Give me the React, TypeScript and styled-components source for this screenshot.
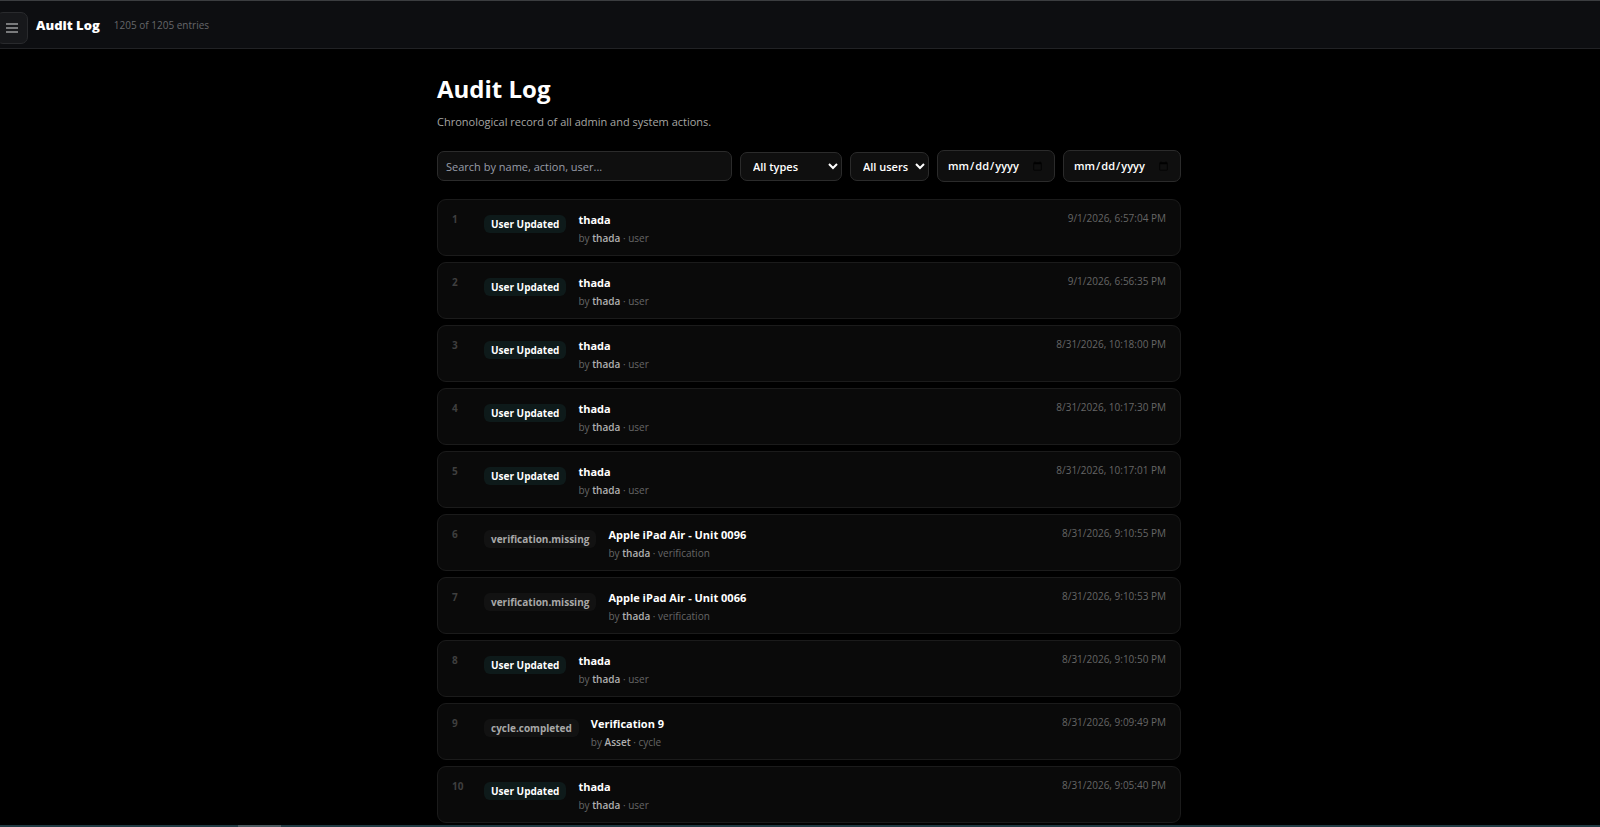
import React from "react";
import styled, { createGlobalStyle } from "styled-components";

const GlobalStyle = createGlobalStyle`
  *, *::before, *::after { box-sizing: border-box; }
  body {
    margin: 0;
    background: #000;
    color: #fff;
    font-family: "Open Sans", "Noto Sans", sans-serif;
    font-size: 11px;
    line-height: 18px;
  }
  button, input, select { font: inherit; color: inherit; }
`;

const Shell = styled.div`
  min-height: 100vh;
  padding-bottom: 4px;
`;

const TopBar = styled.header`
  display: flex;
  align-items: center;
  height: 49px;
  padding-left: 36px;
  gap: 14px;
  background: #0d0e11;
  border-top: 1px solid #3b3d40;
  border-bottom: 1px solid #212225;
`;

const MenuButton = styled.button`
  position: absolute;
  top: 12px;
  left: -4px;
  display: flex;
  align-items: center;
  justify-content: center;
  width: 32px;
  height: 32px;
  padding: 0;
  background: #17181b;
  border: 1px solid #292a2d;
  border-radius: 7px;
  color: #9a9b9d;
`;

const BarTitle = styled.span`
  font-size: 13px;
  font-weight: 800;
`;

const BarCount = styled.span`
  font-size: 10px;
  color: #66676a;
`;

const Content = styled.main`
  padding: 23px 0 0 18px;
`;

const Column = styled.div`
  width: 100%;
  max-width: 744px;
  margin: 0 auto;
`;

const Heading = styled.h1`
  margin: 0;
  font-size: 24px;
  line-height: 34px;
  font-weight: 700;
`;

const Subtitle = styled.p`
  margin: 7px 0 19px;
  color: #a6a6a3;
`;

const Filters = styled.form`
  display: flex;
  align-items: center;
  gap: 8px;
  margin-bottom: 17px;
`;

const Search = styled.input`
  flex: 1;
  min-width: 0;
  height: 30px;
  padding: 0 8px;
  background: #0f0f0f;
  border: 1px solid #2b2b2b;
  border-radius: 7px;
  &::placeholder { color: #989da8; opacity: 1; }
`;

const Select = styled.select<{ $width: number }>`
  width: ${(p) => p.$width}px;
  height: 29px;
  padding: 0 0 0 8px;
  background: #0f0f0f;
  border: 1px solid #2b2b2b;
  border-radius: 7px;
  font-weight: 600;
`;

const DateInput = styled.input`
  width: 118px;
  height: 32px;
  padding: 0 9px;
  background: #0f0f0f;
  border: 1px solid #2b2b2b;
  border-radius: 7px;
  font-weight: 600;
`;

const Entries = styled.ol`
  display: flex;
  flex-direction: column;
  gap: 6px;
  margin: 0;
  padding: 0;
  list-style: none;
`;

const Entry = styled.li`
  display: flex;
  align-items: flex-start;
  gap: 12px;
  height: 57px;
  padding: 10px 14px;
  background: #0a0a0a;
  border: 1px solid #1b1b1b;
  border-radius: 9px;
`;

const Index = styled.span`
  width: 20px;
  font-size: 10px;
  font-weight: 700;
  color: #3f3f3f;
`;

const Badge = styled.span<{ $known: boolean }>`
  margin-top: 5px;
  padding: 0 7px;
  border-radius: 6px;
  font-size: 10px;
  font-weight: 700;
  background: ${(p) => (p.$known ? "#0e1a1a" : "#121212")};
  color: ${(p) => (p.$known ? "#fff" : "#a8a8a8")};
`;

const Details = styled.div`
  flex: 1;
  min-width: 0;
`;

const Name = styled.div`
  margin-top: 1px;
  font-weight: 700;
`;

const Meta = styled.div`
  font-size: 10px;
  color: #666;
  strong { font-weight: 600; color: #b0b0b0; }
`;

const Stamp = styled.time`
  font-size: 10px;
  line-height: 16px;
  color: #666;
`;

const Track = styled.div`
  position: fixed;
  inset: auto 0 0 0;
  height: 2px;
  padding-left: 238px;
  background: #213b44;
`;

const Thumb = styled.div`
  width: 43px;
  height: 2px;
  background: #4b5a60;
`;

const labels: Record<string, string> = { "user.updated": "User Updated" };

const entries = [
  ["user.updated", "thada", "thada", "user", "9/1/2026, 6:57:04 PM"],
  ["user.updated", "thada", "thada", "user", "9/1/2026, 6:56:35 PM"],
  ["user.updated", "thada", "thada", "user", "8/31/2026, 10:18:00 PM"],
  ["user.updated", "thada", "thada", "user", "8/31/2026, 10:17:30 PM"],
  ["user.updated", "thada", "thada", "user", "8/31/2026, 10:17:01 PM"],
  ["verification.missing", "Apple iPad Air - Unit 0096", "thada", "verification", "8/31/2026, 9:10:55 PM"],
  ["verification.missing", "Apple iPad Air - Unit 0066", "thada", "verification", "8/31/2026, 9:10:53 PM"],
  ["user.updated", "thada", "thada", "user", "8/31/2026, 9:10:50 PM"],
  ["cycle.completed", "Verification 9", "Asset", "cycle", "8/31/2026, 9:09:49 PM"],
  ["user.updated", "thada", "thada", "user", "8/31/2026, 9:05:40 PM"],
];

export default function App() {
  return (
    <Shell>
      <GlobalStyle />
      <TopBar>
        <MenuButton type="button" aria-label="Open menu">
          <svg width="12" height="10" viewBox="0 0 12 10" stroke="currentColor" strokeWidth="1.3" aria-hidden="true">
            <path d="M0 1h12M0 5h12M0 9h12" />
          </svg>
        </MenuButton>
        <BarTitle>Audit Log</BarTitle>
        <BarCount>1205 of 1205 entries</BarCount>
      </TopBar>
      <Content>
        <Column>
          <Heading>Audit Log</Heading>
          <Subtitle>Chronological record of all admin and system actions.</Subtitle>
          <Filters>
            <Search type="text" aria-label="Search entries" placeholder="Search by name, action, user..." />
            <Select $width={102} aria-label="Type"><option>All types</option></Select>
            <Select $width={79} aria-label="User"><option>All users</option></Select>
            <DateInput type="date" aria-label="From date" />
            <DateInput type="date" aria-label="To date" />
          </Filters>
          <Entries>
            {entries.map(([action, name, actor, kind, at], i) => (
              <Entry key={i}>
                <Index>{i + 1}</Index>
                <Badge $known={action in labels}>{labels[action] ?? action}</Badge>
                <Details>
                  <Name>{name}</Name>
                  <Meta>by <strong>{actor}</strong> · {kind}</Meta>
                </Details>
                <Stamp>{at}</Stamp>
              </Entry>
            ))}
          </Entries>
        </Column>
      </Content>
      <Track><Thumb /></Track>
    </Shell>
  );
}
